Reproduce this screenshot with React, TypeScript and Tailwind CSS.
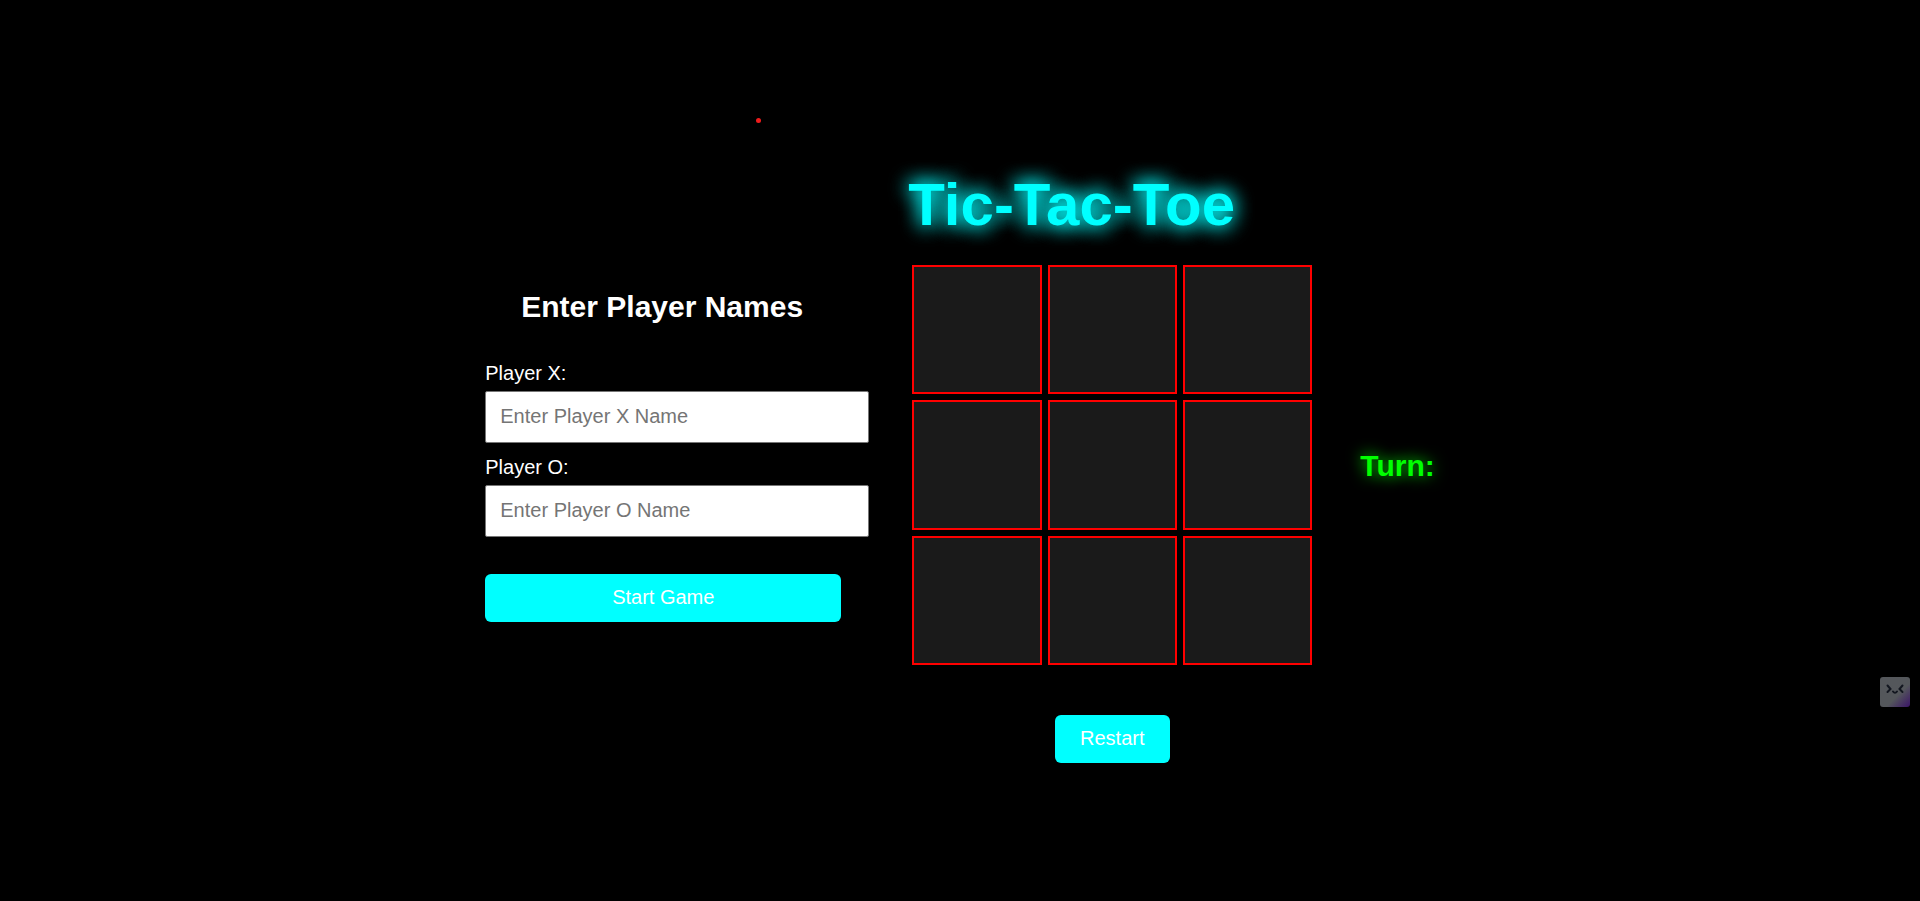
import { useState } from "react";

const fieldClass =
  "h-[52px] w-full rounded-[2px] border border-[#767676] bg-white px-3.5 text-xl text-black placeholder:text-[#757575]";
const buttonClass =
  "h-12 cursor-pointer rounded-md bg-[#00ffff] pb-0.5 text-xl text-white";

function NameField({
  id,
  label,
  placeholder,
}: {
  id: string;
  label: string;
  placeholder: string;
}) {
  return (
    <div className="flex flex-col gap-1">
      <label htmlFor={id} className="text-xl leading-7">
        {label}
      </label>
      <input id={id} type="text" placeholder={placeholder} className={fieldClass} />
    </div>
  );
}

export default function App() {
  const [cells, setCells] = useState<string[]>(Array(9).fill(""));

  const play = (index: number) => {
    if (cells[index]) return;
    const mark = cells.filter(Boolean).length % 2 === 0 ? "X" : "O";
    setCells(cells.map((cell, i) => (i === index ? mark : cell)));
  };

  return (
    <div className="relative flex min-h-screen items-center justify-center bg-black font-['Liberation_Sans',Arial,sans-serif] text-white">
      <main className="flex items-center">
        <form
          className="flex w-96 flex-col pt-2.5"
          onSubmit={(event) => event.preventDefault()}
        >
          <h2 className="mb-[34px] pl-9 text-[30px] leading-9 font-bold">Enter Player Names</h2>
          <div className="flex flex-col gap-2.5">
            <NameField id="player-x" label="Player X:" placeholder="Enter Player X Name" />
            <NameField id="player-o" label="Player O:" placeholder="Enter Player O Name" />
          </div>
          <button type="submit" className={`${buttonClass} mt-[37px] mr-7`}>
            Start Game
          </button>
        </form>

        <section className="ml-[43px] flex w-[400px] flex-col items-center pt-[31px]">
          <h1 className="mb-6 -ml-1 self-start text-[60px] leading-[72px] font-bold whitespace-nowrap text-[#00ffff] [text-shadow:0_0_20px_#00ffff,0_0_20px_#00ffff]">
            Tic-Tac-Toe
          </h1>
          <div className="grid w-full grid-cols-3 gap-1.5">
            {cells.map((cell, index) => (
              <button
                key={index}
                type="button"
                aria-label={`Cell ${index + 1}`}
                onClick={() => play(index)}
                className="aspect-square cursor-pointer border-2 border-[#ff0000] bg-[#1a1a1a] text-6xl font-bold"
              >
                {cell}
              </button>
            ))}
          </div>
          <button
            type="button"
            onClick={() => setCells(Array(9).fill(""))}
            className={`${buttonClass} mt-[50px] px-[25px]`}
          >
            Restart
          </button>
        </section>

        <p className="mt-8 ml-12 text-[30px] leading-9 font-bold text-[#00ff00] [text-shadow:0_0_15px_#00ff00]">
          Turn:
        </p>
      </main>

      <span className="absolute top-[118px] left-[756px] size-[5px] rounded-full bg-[#f01c1c]" />

      <svg viewBox="0 0 30 30" className="absolute top-[677px] right-2.5 size-[30px]" aria-hidden="true">
        <defs>
          <linearGradient id="face" x1="0" y1="0" x2="1" y2="1">
            <stop offset="0.6" stopColor="#54575b" />
            <stop offset="1" stopColor="#3b1468" />
          </linearGradient>
        </defs>
        <rect width="30" height="30" rx="3" fill="url(#face)" />
        <path
          d="M7.500 8.500L10.500 12L7.500 15M22.500 8.500L19.500 12L22.500 15M13 14.500Q15 17 17 14.500"
          fill="none"
          stroke="#12161f"
          strokeWidth="2"
          strokeLinecap="round"
        />
      </svg>
    </div>
  );
}
